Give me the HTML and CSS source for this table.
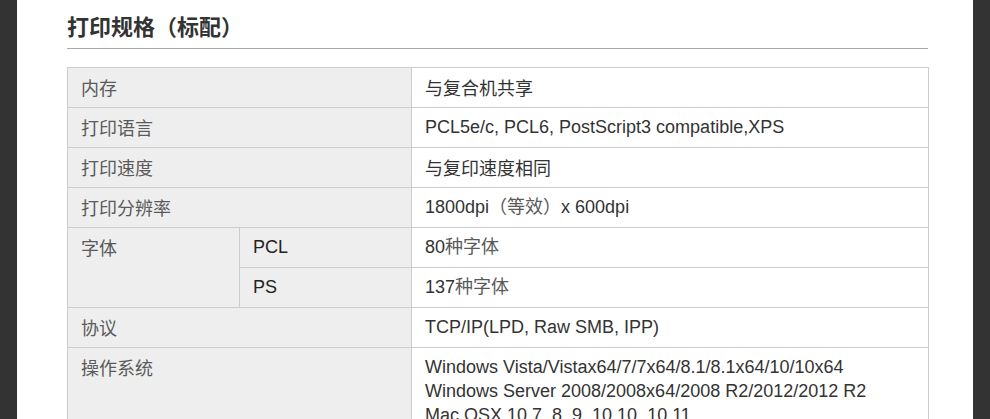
FILE: index.html
```html
<!DOCTYPE html>
<html lang="zh-CN">
<head>
<meta charset="utf-8">
<link rel="stylesheet" href="styles.css">
</head>
<body>
<div class="page">
  <h2 class="title">打印规格（标配）</h2>
  <table class="spec">
    <colgroup><col class="c1"><col class="c2"><col class="c3"></colgroup>
    <tr><th colspan="2">内存</th><td class="zh">与复合机共享</td></tr>
    <tr><th colspan="2">打印语言</th><td>PCL5e/c, PCL6, PostScript3 compatible,XPS</td></tr>
    <tr><th colspan="2">打印速度</th><td class="zh">与复印速度相同</td></tr>
    <tr><th colspan="2">打印分辨率</th><td>1800dpi<span class="zh-in">（等效）</span>x 600dpi</td></tr>
    <tr><th rowspan="2">字体</th><th class="sub">PCL</th><td>80<span class="zh-in">种字体</span></td></tr>
    <tr><th class="sub">PS</th><td>137<span class="zh-in">种字体</span></td></tr>
    <tr><th colspan="2">协议</th><td>TCP/IP(LPD, Raw SMB, IPP)</td></tr>
    <tr><th colspan="2">操作系统</th><td>Windows Vista/Vistax64/7/7x64/8.1/8.1x64/10/10x64<br>Windows Server 2008/2008x64/2008 R2/2012/2012 R2<br>Mac OSX 10.7, 8, 9, 10.10, 10.11</td></tr>
  </table>
</div>
</body>
</html>
```
FILE: styles.css
```css
html, body {
  margin: 0;
  padding: 0;
  background: #333333;
  height: 100%;
}
body {
  font-family: "Liberation Sans", Arial, "Noto Sans CJK SC", sans-serif;
  color: #333;
}
.page {
  margin-left: 17px;
  width: 956px;
  box-sizing: border-box;
  padding: 0 45px 0 50px;
  background: #fff;
  min-height: 100%;
}
.title {
  margin: 0;
  padding-top: 10px;
  height: 38px;
  font-size: 22px;
  line-height: 30px;
  font-weight: bold;
  color: #333;
  font-family: "Noto Sans CJK SC", sans-serif;
  border-bottom: 1px solid #aaaaaa;
}
.spec {
  margin-top: 18px;
  width: 861px;
  border-collapse: collapse;
  table-layout: fixed;
  font-size: 18px;
  line-height: 24px;
}
.c1 { width: 172px; }
.c2 { width: 172px; }
.c3 { width: 517px; }
.spec th, .spec td {
  border: 1px solid #cccccc;
  padding: 7px 13px 8px;
  text-align: left;
  vertical-align: top;
  font-weight: normal;
  height: 24px;
}
.spec th {
  background: #eeeeee;
  color: #5a5a5a;
  font-family: "Noto Sans CJK SC", sans-serif;
}
.spec th.sub {
  color: #222;
  font-family: "Liberation Sans", Arial, sans-serif;
}
.spec td {
  color: #333;
}
.zh {
  font-family: "Noto Sans CJK SC", sans-serif;
  color: #5a5a5a;
}
.zh-in {
  font-family: "Noto Sans CJK SC", sans-serif;
  color: #5a5a5a;
  line-height: 18px;
}
```
